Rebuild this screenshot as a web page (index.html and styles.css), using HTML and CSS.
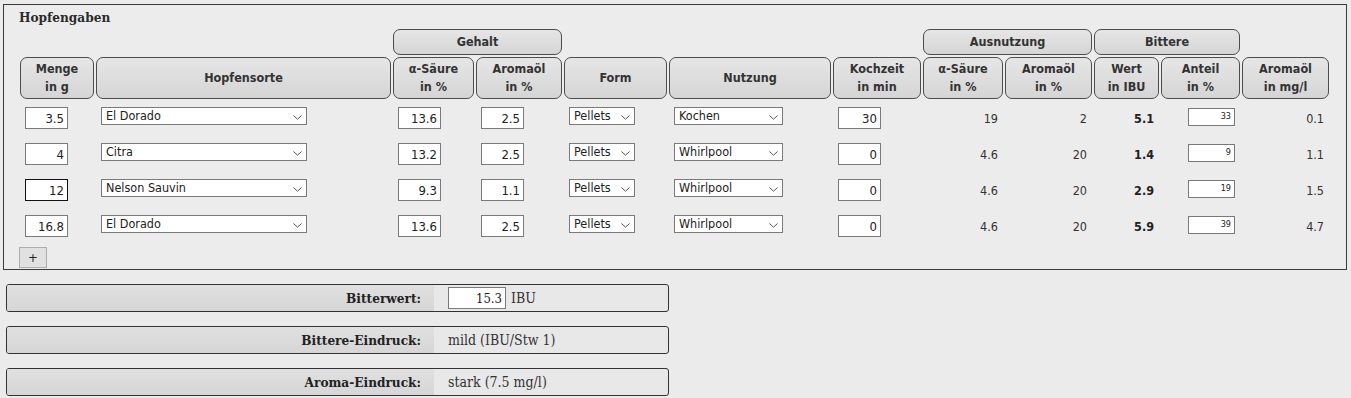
FILE: index.html
```html
<!DOCTYPE html>
<html lang="de">
<head>
<meta charset="utf-8">
<title>Hopfengaben</title>
<link rel="stylesheet" href="styles.css">
</head>
<body>
<section class="hop-box">
  <div class="box-title">Hopfengaben</div>
  <table class="hops">
    <colgroup>
      <col class="c-menge"><col class="c-sorte"><col class="c-alpha"><col class="c-oel"><col class="c-form"><col class="c-nutz"><col class="c-koch"><col class="c-aus-a"><col class="c-aus-o"><col class="c-wert"><col class="c-anteil"><col class="c-mgl">
    </colgroup>
    <thead>
      <tr class="group-row">
        <td colspan="2"></td>
        <th colspan="2" class="hd">Gehalt</th>
        <td colspan="3"></td>
        <th colspan="2" class="hd">Ausnutzung</th>
        <th colspan="2" class="hd">Bittere</th>
        <td></td>
      </tr>
      <tr class="col-row">
        <th class="hd">Menge<br>in g</th>
        <th class="hd">Hopfensorte</th>
        <th class="hd">α-Säure<br>in %</th>
        <th class="hd">Aromaöl<br>in %</th>
        <th class="hd">Form</th>
        <th class="hd">Nutzung</th>
        <th class="hd">Kochzeit<br>in min</th>
        <th class="hd">α-Säure<br>in %</th>
        <th class="hd">Aromaöl<br>in %</th>
        <th class="hd">Wert<br>in IBU</th>
        <th class="hd">Anteil<br>in %</th>
        <th class="hd">Aromaöl<br>in mg/l</th>
      </tr>
    </thead>
    <tbody>
      <tr>
        <td><input class="num" value="3.5"></td>
        <td><span class="sel"><select class="sel-sorte"><option>El Dorado</option></select><svg class="chev" width="9" height="5" viewBox="0 0 9 5"><path d="M0.5 0.5 L4.5 4.2 L8.5 0.5" fill="none" stroke="#555" stroke-width="1"/></svg></span></td>
        <td><input class="num" value="13.6"></td>
        <td><input class="num" value="2.5"></td>
        <td><span class="sel"><select class="sel-form"><option>Pellets</option></select><svg class="chev" width="9" height="5" viewBox="0 0 9 5"><path d="M0.5 0.5 L4.5 4.2 L8.5 0.5" fill="none" stroke="#555" stroke-width="1"/></svg></span></td>
        <td><span class="sel"><select class="sel-nutz"><option>Kochen</option></select><svg class="chev" width="9" height="5" viewBox="0 0 9 5"><path d="M0.5 0.5 L4.5 4.2 L8.5 0.5" fill="none" stroke="#555" stroke-width="1"/></svg></span></td>
        <td><input class="num" value="30"></td>
        <td class="val">19</td>
        <td class="val">2</td>
        <td class="val strong">5.1</td>
        <td class="anteil"><input class="small" value="33"></td>
        <td class="val">0.1</td>
      </tr>
      <tr>
        <td><input class="num" value="4"></td>
        <td><span class="sel"><select class="sel-sorte"><option>Citra</option></select><svg class="chev" width="9" height="5" viewBox="0 0 9 5"><path d="M0.5 0.5 L4.5 4.2 L8.5 0.5" fill="none" stroke="#555" stroke-width="1"/></svg></span></td>
        <td><input class="num" value="13.2"></td>
        <td><input class="num" value="2.5"></td>
        <td><span class="sel"><select class="sel-form"><option>Pellets</option></select><svg class="chev" width="9" height="5" viewBox="0 0 9 5"><path d="M0.5 0.5 L4.5 4.2 L8.5 0.5" fill="none" stroke="#555" stroke-width="1"/></svg></span></td>
        <td><span class="sel"><select class="sel-nutz"><option>Whirlpool</option></select><svg class="chev" width="9" height="5" viewBox="0 0 9 5"><path d="M0.5 0.5 L4.5 4.2 L8.5 0.5" fill="none" stroke="#555" stroke-width="1"/></svg></span></td>
        <td><input class="num" value="0"></td>
        <td class="val">4.6</td>
        <td class="val">20</td>
        <td class="val strong">1.4</td>
        <td class="anteil"><input class="small" value="9"></td>
        <td class="val">1.1</td>
      </tr>
      <tr>
        <td><input class="num is-hover" value="12"></td>
        <td><span class="sel"><select class="sel-sorte"><option>Nelson Sauvin</option></select><svg class="chev" width="9" height="5" viewBox="0 0 9 5"><path d="M0.5 0.5 L4.5 4.2 L8.5 0.5" fill="none" stroke="#555" stroke-width="1"/></svg></span></td>
        <td><input class="num" value="9.3"></td>
        <td><input class="num" value="1.1"></td>
        <td><span class="sel"><select class="sel-form"><option>Pellets</option></select><svg class="chev" width="9" height="5" viewBox="0 0 9 5"><path d="M0.5 0.5 L4.5 4.2 L8.5 0.5" fill="none" stroke="#555" stroke-width="1"/></svg></span></td>
        <td><span class="sel"><select class="sel-nutz"><option>Whirlpool</option></select><svg class="chev" width="9" height="5" viewBox="0 0 9 5"><path d="M0.5 0.5 L4.5 4.2 L8.5 0.5" fill="none" stroke="#555" stroke-width="1"/></svg></span></td>
        <td><input class="num" value="0"></td>
        <td class="val">4.6</td>
        <td class="val">20</td>
        <td class="val strong">2.9</td>
        <td class="anteil"><input class="small" value="19"></td>
        <td class="val">1.5</td>
      </tr>
      <tr>
        <td><input class="num" value="16.8"></td>
        <td><span class="sel"><select class="sel-sorte"><option>El Dorado</option></select><svg class="chev" width="9" height="5" viewBox="0 0 9 5"><path d="M0.5 0.5 L4.5 4.2 L8.5 0.5" fill="none" stroke="#555" stroke-width="1"/></svg></span></td>
        <td><input class="num" value="13.6"></td>
        <td><input class="num" value="2.5"></td>
        <td><span class="sel"><select class="sel-form"><option>Pellets</option></select><svg class="chev" width="9" height="5" viewBox="0 0 9 5"><path d="M0.5 0.5 L4.5 4.2 L8.5 0.5" fill="none" stroke="#555" stroke-width="1"/></svg></span></td>
        <td><span class="sel"><select class="sel-nutz"><option>Whirlpool</option></select><svg class="chev" width="9" height="5" viewBox="0 0 9 5"><path d="M0.5 0.5 L4.5 4.2 L8.5 0.5" fill="none" stroke="#555" stroke-width="1"/></svg></span></td>
        <td><input class="num" value="0"></td>
        <td class="val">4.6</td>
        <td class="val">20</td>
        <td class="val strong">5.9</td>
        <td class="anteil"><input class="small" value="39"></td>
        <td class="val">4.7</td>
      </tr>
    </tbody>
  </table>
  <button class="add" type="button">+</button>
</section>

<div class="summary">
  <div class="panel">
    <div class="p-label">Bitterwert:</div>
    <div class="p-value"><input class="num ibu" value="15.3"><span class="unit">IBU</span></div>
  </div>
  <div class="panel">
    <div class="p-label">Bittere-Eindruck:</div>
    <div class="p-value">mild (IBU/Stw 1)</div>
  </div>
  <div class="panel">
    <div class="p-label">Aroma-Eindruck:</div>
    <div class="p-value">stark (7.5 mg/l)</div>
  </div>
</div>
</body>
</html>
```

FILE: styles.css
```css
* { box-sizing: border-box; }

html, body {
  margin: 0;
  padding: 0;
  background: #ebebeb;
  color: #222;
  font-family: "DejaVu Sans Condensed", "DejaVu Sans", sans-serif;
}

.hop-box {
  margin: 4px 5px 0 3px;
  width: 1344px;
  border: 1px solid #3a3a3a;
  background: #ececec;
  padding: 0 14px 1px 14px;
}

.box-title {
  font-family: "DejaVu Serif Condensed", "DejaVu Serif", serif;
  font-weight: bold;
  font-size: 13.5px;
  line-height: 16px;
  padding: 4px 0 0 1px;
  color: #2a2a2a;
}

.hops {
  table-layout: fixed;
  width: 1313px;
  border-collapse: separate;
  border-spacing: 2px;
  margin-top: 2px;
}

.c-menge { width: 74px; }
.c-sorte { width: 295px; }
.c-alpha { width: 81px; }
.c-oel { width: 86px; }
.c-form { width: 103px; }
.c-nutz { width: 162px; }
.c-koch { width: 88px; }
.c-aus-a { width: 80px; }
.c-aus-o { width: 87px; }
.c-wert { width: 65px; }
.c-anteil { width: 79px; }
.c-mgl { width: 87px; }

.hops th, .hops td { padding: 0; }

.hd {
  border: 1px solid #4d4d4d;
  border-radius: 7px;
  background: linear-gradient(#e6e6e6, #d5d5d5);
  color: #333;
  font-size: 12.5px;
  font-weight: bold;
  text-align: center;
  vertical-align: middle;
  line-height: 18px;
}

.group-row .hd,
.group-row td { height: 26px; }
.col-row .hd { height: 42px; }

.hops tbody td {
  height: 34px;
  vertical-align: top;
  padding: 6px 0 0 5px;
}

.num {
  width: 43px;
  height: 22px;
  border: 1px solid #7a7a7a;
  background: #fff;
  text-align: right;
  font-family: inherit;
  font-size: 13px;
  color: #222;
  padding: 0 3px 0 2px;
  margin: 0;
  display: block;
}

.num.is-hover { border-color: #111; }

.sel {
  position: relative;
  display: inline-block;
  vertical-align: top;
}

.sel select {
  -webkit-appearance: none;
  appearance: none;
  height: 18px;
  border: 1px solid #7a7a7a;
  border-radius: 0;
  background: #fff;
  font-family: inherit;
  font-size: 12.5px;
  color: #222;
  padding: 0 0 2px 4px;
  margin: 0;
  line-height: 15px;
  display: block;
}

.sel-sorte { width: 206px; }
.sel-form { width: 66px; }
.sel-nutz { width: 109px; }

.chev {
  position: absolute;
  right: 5px;
  top: 8px;
  pointer-events: none;
}

.hops tbody td.val {
  text-align: right;
  padding: 6px 5px 0 0;
  font-size: 12.5px;
  line-height: 24px;
  color: #333;
}

.hops tbody td.strong { font-weight: bold; color: #222; }

.hops tbody td.anteil { padding: 7px 0 0 27px; }

.small {
  width: 47px;
  height: 18px;
  border: 1px solid #7a7a7a;
  background: #fff;
  text-align: right;
  font-family: inherit;
  font-size: 9px;
  padding: 0 3px 2px 0;
  margin: 0;
  display: block;
  color: #222;
}

.add {
  display: block;
  margin: 2px 0 0 1px;
  width: 28px;
  height: 21px;
  border: 1px solid #adadad;
  background: #e1e1e1;
  font-family: inherit;
  font-size: 13px;
  color: #222;
  padding: 0;
  line-height: 18px;
}

.summary {
  display: flex;
  flex-direction: column;
  gap: 14px;
  margin: 14px 0 0 6px;
}

.panel {
  display: flex;
  width: 663px;
  height: 28px;
  border: 1px solid #333;
  border-radius: 3px;
  background: #e8e8e8;
  overflow: hidden;
}

.p-label {
  width: 427px;
  flex: none;
  background: linear-gradient(#e0e0e0, #d6d6d6);
  text-align: right;
  padding-right: 13px;
  font-family: "DejaVu Serif Condensed", "DejaVu Serif", serif;
  font-weight: bold;
  font-size: 13.5px;
  line-height: 26px;
  color: #222;
}

.p-value {
  display: flex;
  align-items: center;
  padding-left: 14px;
  font-family: "DejaVu Serif Condensed", "DejaVu Serif", serif;
  font-size: 14px;
  color: #333;
}

.num.ibu { width: 58px; }

.unit { margin-left: 5px; }
```
